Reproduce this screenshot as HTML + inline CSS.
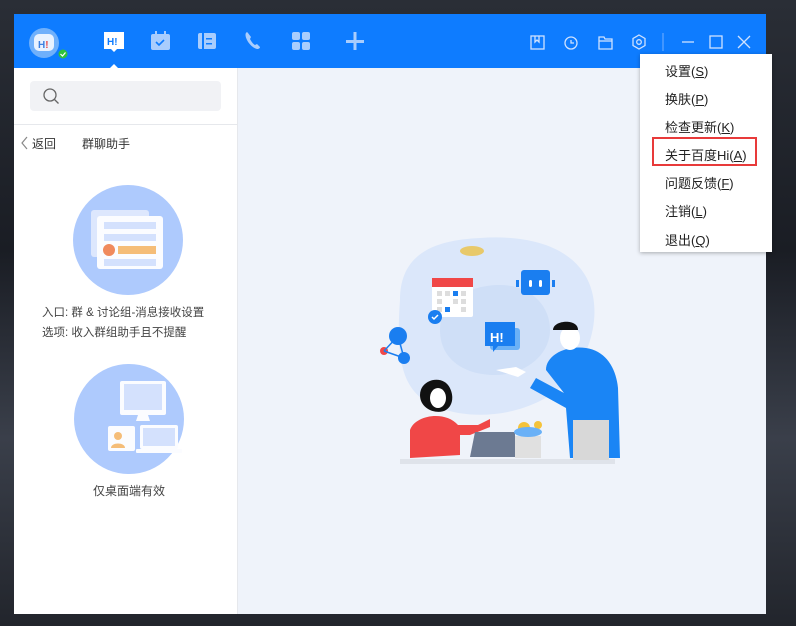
<!DOCTYPE html>
<html><head><meta charset="utf-8"><style>
*{margin:0;padding:0;box-sizing:border-box}
body{width:796px;height:626px;overflow:hidden;position:relative;background:#1d2129;font-family:"Liberation Sans","Noto Sans CJK SC",sans-serif;}
.bg{position:absolute;inset:0;background:linear-gradient(180deg,#2a2e36 0%,#1a1d24 40%,#3a3f4a 70%,#22252c 100%)}
.win{position:absolute;left:14px;top:14px;width:752px;height:600px;background:#eff3fa}
.hdr{position:absolute;left:0;top:0;width:752px;height:54px;background:#0e7cff}
.side{position:absolute;left:0;top:54px;width:224px;height:546px;background:#fff;border-right:1px solid #e6e8ec}
.search{position:absolute;left:16px;top:13px;width:191px;height:30px;background:#f1f2f5;border-radius:4px}
.t{position:absolute;font-size:12px;color:#333;white-space:nowrap}
.menu{position:absolute;left:640px;top:54px;width:132px;height:198px;background:#fff;box-shadow:0 1px 4px rgba(0,0,0,.3)}
.menu div{position:absolute;left:25px;font-size:13px;color:#222;white-space:nowrap}
.menu u{text-decoration:underline}
.red{position:absolute;left:12px;top:83px;width:105px;height:29px;border:2px solid #e83a3a}
</style></head><body>
<div class="bg"></div>
<div class="win">
<div class="hdr">
<svg width="752" height="54" style="position:absolute;left:0;top:0">
<circle cx="30" cy="29" r="15" fill="#6fb0fb"/>
<rect x="20" y="20" width="20" height="17" rx="5" fill="#e8f2ff"/>
<text x="24" y="34" font-size="10" font-weight="bold" fill="#3b7fe0" font-family="Liberation Sans">H<tspan fill="#e84a4a">!</tspan></text>
<circle cx="49" cy="40" r="5" fill="#2fc23c" stroke="#0e7cff" stroke-width="1"/>
<path d="M46.5 40l2 2 3-3.5" stroke="#fff" stroke-width="1.2" fill="none"/>
<path d="M90 18h20v17h-7l-3 3-3-3h-7z" fill="#fff"/>
<text x="93" y="31" font-size="10" font-weight="bold" fill="#0e7cff" font-family="Liberation Sans">H!</text>
<path d="M96 54l4-4 4 4z" fill="#fff"/>
<rect x="137" y="20" width="19" height="16" rx="2" fill="#a9cdfd"/>
<rect x="141" y="17" width="2" height="5" fill="#a9cdfd"/><rect x="150" y="17" width="2" height="5" fill="#a9cdfd"/>
<path d="M142 28l3 3 5-5" stroke="#0e7cff" stroke-width="1.6" fill="none"/>
<rect x="184" y="19" width="18" height="16" rx="2" fill="#a9cdfd"/>
<rect x="188" y="19" width="2" height="16" fill="#0e7cff"/>
<rect x="192" y="24" width="6" height="1.5" fill="#0e7cff"/><rect x="192" y="29" width="6" height="1.5" fill="#0e7cff"/>
<path d="M233 18c-2 1-2 4 0 8s6 8 10 9c2 0 3-1 3-2l-3-3-2 1c-2-1-4-4-5-6l1-2-3-4z" fill="#a9cdfd"/>
<rect x="278" y="18" width="8" height="8" rx="2" fill="#a9cdfd"/><rect x="288" y="18" width="8" height="8" rx="2" fill="#a9cdfd"/>
<rect x="278" y="28" width="8" height="8" rx="2" fill="#a9cdfd"/><rect x="288" y="28" width="8" height="8" rx="2" fill="#a9cdfd"/>
<rect x="332" y="26" width="18" height="3" fill="#a9cdfd"/><rect x="339.5" y="18" width="3" height="18" fill="#a9cdfd"/>
<g stroke="#cfe2ff" stroke-width="1.3" fill="none">
<rect x="517" y="22" width="13" height="13"/><path d="M521 22v6l2-2 2 2v-6"/>
<circle cx="557" cy="29" r="6"/><path d="M557 26v3h3"/>
<path d="M585 23h5l1 2h7v10h-13z"/><path d="M585 27h13"/>
<path d="M625 21l6 3.5v7l-6 3.5-6-3.5v-7z"/><circle cx="625" cy="28" r="2.3"/>
<path d="M649 19v18" stroke="#5ea4ff"/>
<path d="M668 28h12"/>
<rect x="696" y="22" width="12" height="12"/>
<path d="M724 22l12 12M736 22l-12 12"/>
</g>
</svg>
</div>
<div class="side">
<div class="search"><svg width="20" height="20" style="position:absolute;left:12px;top:5px"><circle cx="8" cy="9" r="6" stroke="#666" stroke-width="1.3" fill="none"/><path d="M12.5 13.5l4 4" stroke="#666" stroke-width="1.3"/></svg></div>
<div style="position:absolute;left:0;top:56px;width:224px;height:1px;background:#e6e8ec"></div>
<svg width="10" height="14" style="position:absolute;left:6px;top:68px"><path d="M7 1l-5 6 5 6" stroke="#888" stroke-width="1.2" fill="none"/></svg>
<div class="t" style="left:18px;top:67px">返回</div>
<div class="t" style="left:68px;top:67px">群聊助手</div>
<svg width="224" height="120" style="position:absolute;left:0;top:116px">
<circle cx="114" cy="56" r="55" fill="#aecafd"/>
<rect x="77" y="26" width="58" height="47" rx="3" fill="#dde7fd"/>
<rect x="83" y="32" width="66" height="53" rx="3" fill="#fbfcff"/>
<rect x="90" y="38" width="52" height="7" fill="#d4e1fd"/><rect x="90" y="50" width="52" height="7" fill="#d4e1fd"/>
<rect x="104" y="62" width="38" height="8" fill="#f5bd78"/><circle cx="95" cy="66" r="6" fill="#f08a5d"/>
<rect x="90" y="75" width="52" height="7" fill="#d4e1fd"/>
</svg>
<div class="t" style="left:28px;top:236px;font-size:11.5px;color:#444">入口: 群 &amp; 讨论组-消息接收设置</div>
<div class="t" style="left:28px;top:256px;font-size:11.5px;color:#444">选项: 收入群组助手且不提醒</div>
<svg width="224" height="120" style="position:absolute;left:0;top:295px">
<circle cx="115" cy="56" r="55" fill="#aecafd"/>
<rect x="106" y="18" width="46" height="34" rx="2" fill="#fbfcff"/><rect x="110" y="21" width="38" height="26" fill="#d4e1fd"/>
<path d="M124 52h10l2 6h-14z" fill="#fbfcff"/>
<rect x="94" y="63" width="27" height="25" rx="2" fill="#fbfcff"/>
<circle cx="104" cy="73" r="4" fill="#f5bd78"/><path d="M97 85c0-6 14-6 14 0z" fill="#f5bd78"/>
<rect x="126" y="62" width="38" height="24" rx="2" fill="#fbfcff"/><rect x="129" y="65" width="32" height="18" fill="#d4e1fd"/>
<rect x="122" y="86" width="46" height="4" rx="1" fill="#fbfcff"/>
</svg>
<div class="t" style="left:79px;top:414px;font-size:12px;color:#444">仅桌面端有效</div>
</div>
<svg width="528" height="546" style="position:absolute;left:224px;top:54px">
<g transform="translate(-238,-68)">
<path d="M400 300c0-50 40-60 80-62 40-3 80 5 100 30 25 30 15 80-10 110-30 35-90 45-130 30-35-12-45-40-40-108z" fill="#dbe7fa"/>
<path d="M440 330c0-30 30-45 60-45s50 20 50 45-25 45-55 45-55-15-55-45z" fill="#cfdff7"/>
<ellipse cx="472" cy="251" rx="12" ry="5" fill="#e8c96a"/>
<rect x="432" y="280" width="41" height="37" rx="2" fill="#fff"/><rect x="432" y="278" width="41" height="9" fill="#f04747"/>
<g fill="#ddd"><rect x="437" y="291" width="5" height="5"/><rect x="445" y="291" width="5" height="5"/><rect x="461" y="291" width="5" height="5"/><rect x="437" y="299" width="5" height="5"/><rect x="453" y="299" width="5" height="5"/><rect x="461" y="299" width="5" height="5"/><rect x="437" y="307" width="5" height="5"/><rect x="461" y="307" width="5" height="5"/></g>
<rect x="453" y="291" width="5" height="5" fill="#1a7ef0"/><rect x="445" y="307" width="5" height="5" fill="#1a7ef0"/>
<circle cx="435" cy="317" r="7" fill="#1a7ef0"/><path d="M432 317l2 2 4-4" stroke="#fff" stroke-width="1.5" fill="none"/>
<rect x="521" y="270" width="29" height="25" rx="3" fill="#1a7ef0"/><rect x="516" y="280" width="3" height="7" fill="#1a7ef0"/><rect x="552" y="280" width="3" height="7" fill="#1a7ef0"/>
<rect x="529" y="280" width="3" height="7" rx="1.5" fill="#fff"/><rect x="539" y="280" width="3" height="7" rx="1.5" fill="#fff"/>
<rect x="490" y="328" width="30" height="22" rx="3" fill="#6ab1f7"/>
<path d="M485 322h30v24h-17l-5 6v-6h-8z" fill="#1a7ef0"/>
<text x="490" y="342" font-size="13" font-weight="bold" fill="#fff" font-family="Liberation Sans">H!</text>
<circle cx="398" cy="336" r="9" fill="#1a7ef0"/><circle cx="404" cy="358" r="6" fill="#1a7ef0"/><circle cx="384" cy="351" r="4" fill="#f04747"/>
<path d="M398 336l6 22M384 351l14-15M384 351l20 7" stroke="#1a7ef0" stroke-width="1.5"/>
<rect x="400" y="459" width="215" height="5" fill="#dfe3ea"/>
<path d="M546 370c0-15 20-25 40-22 20 3 30 20 32 40l2 70h-50l-4-50-36-20 6-10 28 15z" fill="#1a85f5"/>
<path d="M496 370l20-3 10 5-8 5z" fill="#fff"/>
<rect x="573" y="420" width="36" height="40" fill="#d8d8d8"/>
<ellipse cx="570" cy="338" rx="10" ry="12" fill="#fff"/>
<path d="M553 330c0-10 25-12 25 0z" fill="#111"/>
<path d="M410 430c5-15 35-20 48-5l20 0 12-6 0 8-20 8-10 0 0 20-50 3z" fill="#f04747"/>
<path d="M420 395c0-15 20-20 28-10 6 8 6 20 -2 25-8 5-26 0-26-15z" fill="#111"/>
<ellipse cx="438" cy="398" rx="8" ry="10" fill="#fff"/>
<path d="M475 432h40v25h-45z" fill="#6c7a92"/>
<rect x="515" y="436" width="26" height="22" fill="#e0e0e0"/>
<circle cx="524" cy="428" r="6" fill="#f5c33b"/><circle cx="538" cy="425" r="4" fill="#f5c33b"/><ellipse cx="528" cy="432" rx="14" ry="5" fill="#6ab1f7"/>
</g>
</svg>
</div>
<div class="menu">
<div style="top:7px">设置(<u>S</u>)</div>
<div style="top:35px">换肤(<u>P</u>)</div>
<div style="top:63px">检查更新(<u>K</u>)</div>
<div style="top:91px">关于百度Hi(<u>A</u>)</div>
<div style="top:119px">问题反馈(<u>F</u>)</div>
<div style="top:147px">注销(<u>L</u>)</div>
<div style="top:176px">退出(<u>Q</u>)</div>
<span class="red"></span>
</div>
</body></html>
